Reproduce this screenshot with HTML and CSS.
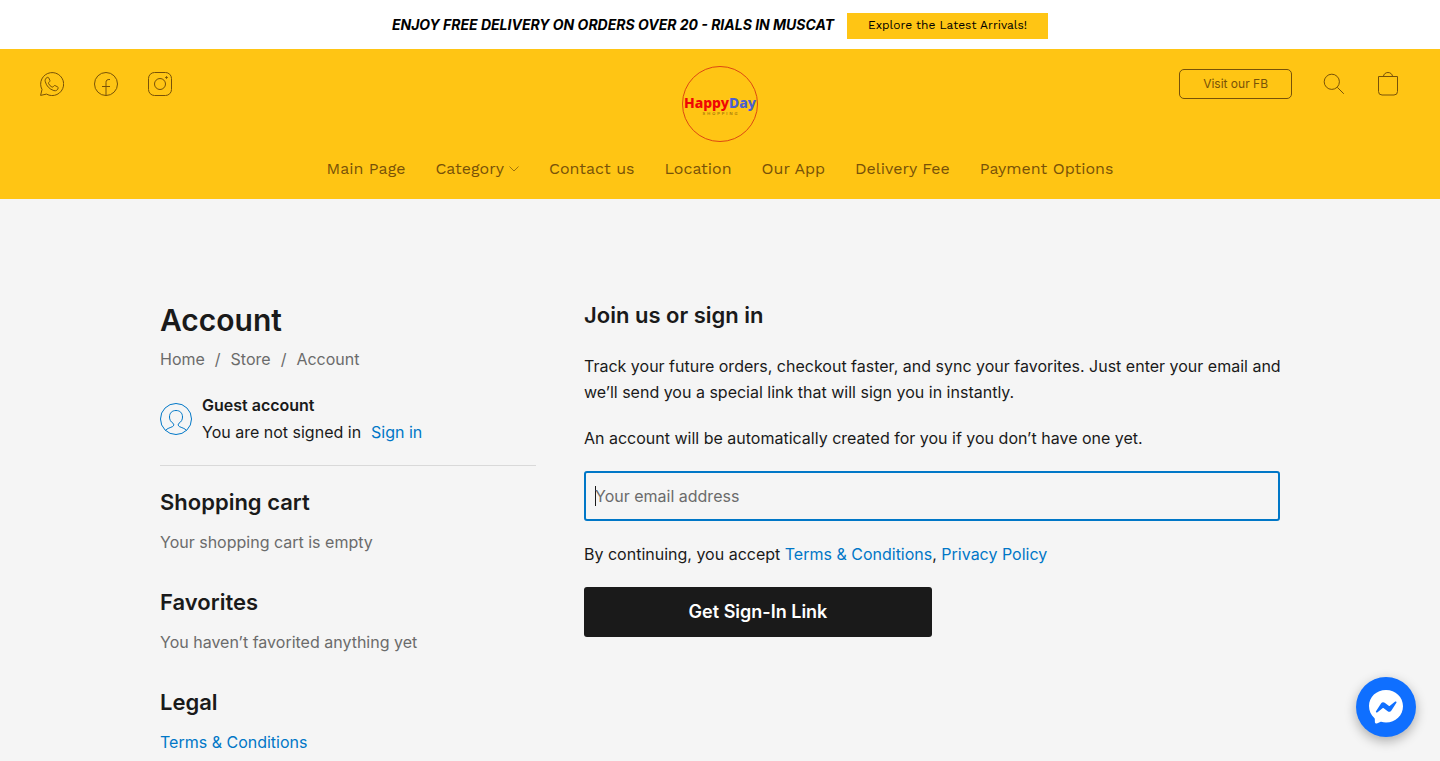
FILE: index.html
```html
<!DOCTYPE html>
<html lang="en">
<head>
<meta charset="utf-8">
<meta name="viewport" content="width=device-width, initial-scale=1">
<title>Account – HappyDay Shopping</title>
<link rel="stylesheet" href="styles.css">
</head>
<body>
<div class="announcement">
  <strong class="announcement-text">ENJOY FREE DELIVERY ON ORDERS OVER 20 - RIALS IN MUSCAT</strong>
  <a class="announcement-button" href="#arrivals">Explore the Latest Arrivals!</a>
</div>
<header class="header">
  <div class="header-top">
    <div class="socials">
      <a class="icon-link" href="#whatsapp" aria-label="WhatsApp">
        <svg class="icon" viewBox="0 0 24 24"><path d="M.6 23.400 2 17.500A11.500 11.500 0 1 1 6.500 22.100Z"/><path d="M7.2 5.4C5.6 6.2 4.7 7.8 5.3 9.8c1.2 4.3 4.2 7.4 8.6 8.8 2.2.6 4.200-.7 4.300-2.800 0-.4-.2-.7-.6-.9l-2.500-1.300c-.4-.2-.8-.1-1.100.2l-1 1.100c-.3.3-.7.300-1.100.1-1.600-.8-2.700-2-3.400-3.600-.1-.4 0-.7.300-1l.9-.9c.3-.3.4-.7.2-1.100L8.700 5.800c-.2-.5-.9-.7-1.500-.4Z"/></svg>
      </a>
      <a class="icon-link" href="#facebook" aria-label="Facebook">
        <svg class="icon" viewBox="0 0 24 24"><circle cx="12" cy="12" r="11.500"/><path d="M12 23.500V10.500c0-2.200 1-3.200 4-3M8 14.500h8"/></svg>
      </a>
      <a class="icon-link" href="#instagram" aria-label="Instagram">
        <svg class="icon" viewBox="0 0 24 24"><rect x=".5" y=".5" width="23" height="23" rx="6"/><circle cx="12" cy="12" r="5.500"/><path d="M18.500 4.200v2.600M17.200 5.500h2.600"/></svg>
      </a>
    </div>
    <a class="logo" href="#home" aria-label="HappyDay Shopping">
      <svg class="logo-art" viewBox="0 0 76 76">
        <circle class="logo-ring" cx="38" cy="38" r="37.500"/>
        <text class="logo-name" x="38" y="42" text-anchor="middle"><tspan class="logo-happy">Happy</tspan><tspan class="logo-day">Day</tspan></text>
        <text class="logo-sub" x="39" y="49" text-anchor="middle">SHOPPING</text>
      </svg>
    </a>
    <div class="tools">
      <a class="visit-button" href="#fb">Visit our FB</a>
      <a class="icon-link" href="#search" aria-label="Search">
        <svg class="icon" viewBox="0 0 24 24"><circle cx="9.800" cy="9.800" r="7.600"/><path d="m15.300 15.300 6.500 6.500"/></svg>
      </a>
      <a class="icon-link" href="#cart" aria-label="Shopping cart">
        <svg class="icon" viewBox="0 0 24 24"><path d="M2.500 4.500h19v15a3.500 3.500 0 0 1-3.500 3.500H6a3.500 3.500 0 0 1-3.500-3.500ZM7.500 4.500a4.500 4 0 0 1 9 0"/></svg>
      </a>
    </div>
  </div>
  <nav class="nav">
    <a class="nav-link" href="#main">Main Page</a>
    <a class="nav-link" href="#category">Category<svg class="chevron" viewBox="0 0 10 6"><path d="m.5.500 4.500 4.500L9.500.500"/></svg></a>
    <a class="nav-link" href="#contact">Contact us</a>
    <a class="nav-link" href="#location">Location</a>
    <a class="nav-link" href="#app">Our App</a>
    <a class="nav-link" href="#delivery">Delivery Fee</a>
    <a class="nav-link" href="#payment">Payment Options</a>
  </nav>
</header>
<main class="page">
  <aside class="sidebar">
    <h1 class="title">Account</h1>
    <nav class="crumbs" aria-label="Breadcrumb">
      <a class="crumb" href="#home">Home</a><span>/</span><a class="crumb" href="#store">Store</a><span>/</span><span>Account</span>
    </nav>
    <div class="guest">
      <svg class="avatar" viewBox="0 0 32 32"><circle cx="16" cy="16" r="15.500"/><path d="M5.500 27.500c1.500-2.200 5-2.800 7.200-4 1.200-.7 1.500-2.200.4-3.200-2.400-1.500-3.600-3.600-3.600-6.300 0-4.100 2.600-6.500 6.500-6.500s6.500 2.400 6.500 6.500c0 2.700-1.200 4.800-3.600 6.300-1.100 1-.8 2.500.4 3.200 2.200 1.200 5.700 1.800 7.200 4"/></svg>
      <div class="guest-text">
        <strong class="guest-name">Guest account</strong>
        <div class="guest-status"><span>You are not signed in</span><a class="link" href="#signin">Sign in</a></div>
      </div>
    </div>
    <section class="block">
      <h2 class="heading">Shopping cart</h2>
      <p class="muted">Your shopping cart is empty</p>
    </section>
    <section class="block">
      <h2 class="heading">Favorites</h2>
      <p class="muted">You haven’t favorited anything yet</p>
    </section>
    <section class="block">
      <h2 class="heading">Legal</h2>
      <a class="link" href="#terms">Terms &amp; Conditions</a>
    </section>
  </aside>
  <form class="signin">
    <h2 class="heading signin-heading">Join us or sign in</h2>
    <p class="text">Track your future orders, checkout faster, and sync your favorites. Just enter your email and we’ll send you a special link that will sign you in instantly.</p>
    <p class="text">An account will be automatically created for you if you don’t have one yet.</p>
    <input class="email" type="email" placeholder="Your email address" aria-label="Your email address" autofocus>
    <p class="text">By continuing, you accept <a class="link" href="#terms">Terms &amp; Conditions</a>, <a class="link" href="#privacy">Privacy Policy</a></p>
    <button class="submit" type="submit">Get Sign-In Link</button>
  </form>
</main>
<button class="chat" type="button" aria-label="Chat on Messenger">
  <svg class="chat-icon" viewBox="0 0 36 36"><path class="chat-bubble" d="M18 1C8.500 1 1 7.900 1 17c0 4.900 2 9 5.300 11.900.3.300.5.700.5 1.100l.1 3c0 1.200 1 1.800 2 1.400l3.300-1.500c.3-.1.600-.1.900-.1 1.500.4 3.200.700 4.900.700 9.500 0 17-7 17-16.200S27.500 1 18 1Z"/><path class="chat-bolt" d="m8 22.300 5-7.900c.8-1.300 2.500-1.600 3.700-.7l4 3c.4.300.8.300 1.200 0l5.300-4.100c.7-.5 1.700.3 1.200 1.100l-5 7.900c-.8 1.300-2.500 1.600-3.700.7l-4-3c-.4-.3-.8-.3-1.200 0l-5.300 4.100c-.7.500-1.700-.3-1.200-1.100Z"/></svg>
</button>
</body>
</html>
```
FILE: styles.css
```css
* { box-sizing: border-box; }

body {
  margin: 0;
  background: #f5f5f5;
  color: #1a1a1a;
  font: 16px/26px Inter, "Liberation Sans", sans-serif;
}

h1, h2, p { margin: 0; }
a { color: inherit; text-decoration: none; }

.announcement {
  display: flex;
  justify-content: center;
  align-items: flex-start;
  gap: 13px;
  padding: 13px 20px 10px;
  background: #fff;
  color: #000;
}
.announcement-text {
  font-size: 14px;
  line-height: 24px;
  font-style: italic;
  font-weight: 700;
}
.announcement-button {
  padding: 0 21px 2px;
  background: #ffc514;
  font: 12px/24px "Work Sans", "Noto Sans", sans-serif;
}

.header {
  padding: 17px 40px 18px;
  background: #ffc514;
  color: #785208;
}
.header-top {
  display: grid;
  grid-template-columns: 1fr auto 1fr;
  align-items: start;
}
.socials, .tools {
  display: flex;
  align-items: center;
  gap: 30px;
  padding-top: 3px;
  min-height: 33px;
}
.tools { justify-content: flex-end; }
.icon-link { display: block; height: 24px; }
.icon {
  display: block;
  width: 24px;
  height: 24px;
  fill: none;
  stroke: currentColor;
}
.visit-button {
  padding: 0 23px;
  border: 1px solid currentColor;
  border-radius: 5px;
  font-size: 12px;
  line-height: 28px;
}
.logo, .logo-art { display: block; width: 76px; height: 76px; }
.logo-ring { fill: none; stroke: #dc4812; }
.logo-name { font: 800 14px "Noto Sans", sans-serif; }
.logo-happy { fill: #f00505; }
.logo-day { fill: #4a5fd0; }
.logo-sub { font: 4px Inter, sans-serif; letter-spacing: 2px; fill: #785208; }

.nav {
  display: flex;
  justify-content: center;
  gap: 30px;
  margin-top: 15px;
  font: 16px/24px "Work Sans", "Noto Sans", sans-serif;
}
.nav-link { display: flex; align-items: center; gap: 5px; }
.chevron { width: 10px; height: 6px; fill: none; stroke: currentColor; opacity: .7; }

.page {
  display: grid;
  grid-template-columns: 47fr 87fr;
  column-gap: 48px;
  max-width: 1160px;
  margin: 0 auto;
  padding: 101px 20px 6px;
}

.title { font-size: 30px; line-height: 40px; font-weight: 600; }
.crumbs { display: flex; gap: 10px; margin-top: 6px; color: #6b6b6b; }
.guest {
  display: flex;
  align-items: center;
  gap: 10px;
  padding: 20px 0 19px;
  border-bottom: 1px solid #d9d9d9;
  line-height: 27px;
}
.avatar { width: 32px; height: 32px; fill: none; stroke: #0077c7; }
.guest-name { display: block; font-weight: 600; }
.guest-status { display: flex; gap: 10px; }
.link { color: #0077c7; }

.block { margin-top: 21px; }
.block + .block { margin-top: 32px; }
.heading { font-size: 22px; line-height: 30px; font-weight: 600; }
.block .heading { margin-bottom: 12px; }
.muted { color: #6b6b6b; }

.signin { display: flex; flex-direction: column; gap: 20px; }
.signin-heading { margin-bottom: 3px; }
.text { margin-right: -10px; }
.email {
  width: 100%;
  height: 50px;
  padding: 0 9px;
  border: 2px solid #0077c7;
  border-radius: 3px;
  outline: 0;
  background: transparent;
  color: #1a1a1a;
  font: inherit;
}
.email::placeholder { color: #6b6b6b; opacity: 1; }
/* Steady caret while the focused field is still empty */
.email:focus:placeholder-shown {
  caret-color: transparent;
  background: linear-gradient(#1a1a1a, #1a1a1a) 9px 50% / 1px 20px no-repeat;
}
.submit {
  width: 50%;
  height: 50px;
  border: 0;
  border-radius: 3px;
  background: #1a1a1a;
  color: #fff;
  font: 600 18px/26px Inter, sans-serif;
}

.chat {
  position: fixed;
  right: 24px;
  bottom: 24px;
  display: grid;
  place-items: center;
  width: 60px;
  height: 60px;
  padding: 0;
  border: 0;
  border-radius: 50%;
  background: #0f6fff;
  box-shadow: 0 4px 12px rgba(0, 0, 0, .3);
}
.chat-icon { width: 36px; height: 36px; }
.chat-bubble { fill: #fff; }
.chat-bolt { fill: #0f6fff; }
```
